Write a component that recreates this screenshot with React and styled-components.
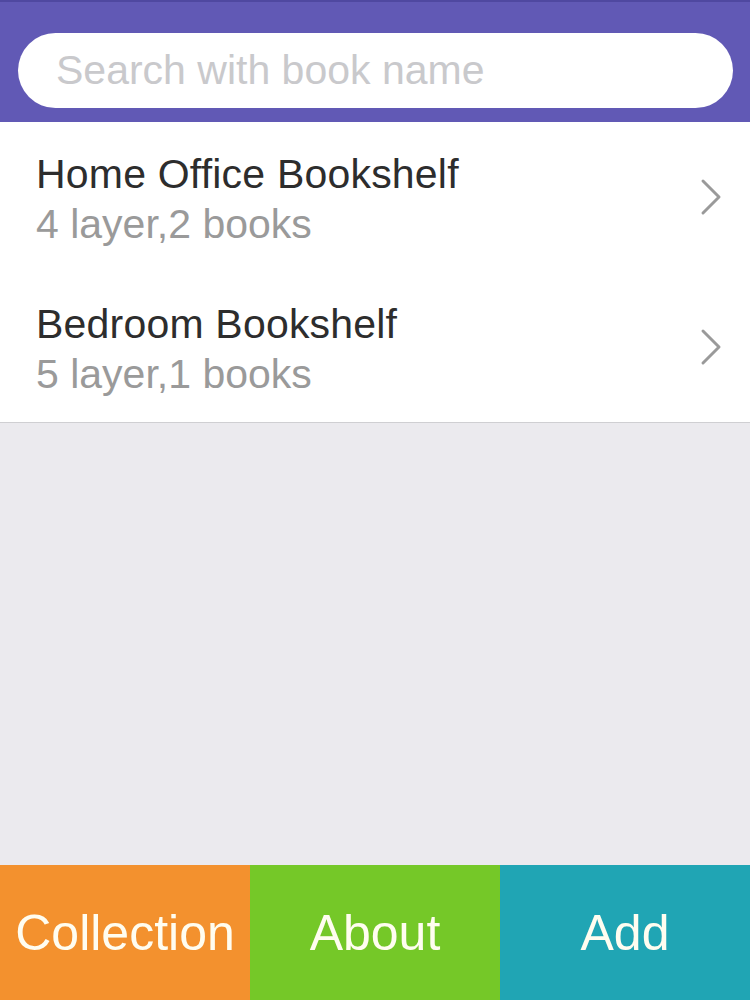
import React from "react";
import styled, { createGlobalStyle } from "styled-components";

const Global = createGlobalStyle`
  html, body { margin: 0; padding: 0; }
  body { font-family: "Liberation Sans", Arial, sans-serif; background: #ebeaee; }
  #root { height: 1000px; }
`;

const Page = styled.div`
  width: 750px;
  height: 1000px;
  display: flex;
  flex-direction: column;
  background: #ebeaee;
`;

const Header = styled.header`
  background: #6159b5;
  border-top: 2px solid #4f48a0;
  padding: 31px 17px 14px 18px;
`;

const SearchBox = styled.input`
  box-sizing: border-box;
  display: block;
  width: 100%;
  height: 75px;
  border: none;
  outline: none;
  border-radius: 38px;
  background: #fff;
  padding: 0 0 0 38px;
  font-family: "Liberation Sans", Arial, sans-serif;
  font-size: 41px;
  color: #333;
  &::placeholder { color: #c9c9cc; }
`;

const List = styled.ul`
  list-style: none;
  margin: 0;
  padding: 0;
  background: #fff;
  border-bottom: 1px solid #cfcfd2;
`;

const Row = styled.li`
  height: 150px;
  display: flex;
  align-items: center;
  padding: 0 28px 0 36px;
`;

const RowText = styled.div`
  flex: 1;
  display: flex;
  flex-direction: column;
  padding-top: 3px;
`;

const Title = styled.div`
  font-size: 41px;
  color: #2d2d2d;
  line-height: 50px;
  letter-spacing: 0.2px;
`;

const Sub = styled.div`
  font-size: 41px;
  color: #9a9a9a;
  line-height: 50px;
`;

const Spacer = styled.div`
  flex: 1;
`;

const TabBar = styled.nav`
  height: 135px;
  display: grid;
  grid-template-columns: repeat(3, 1fr);
`;

const Tab = styled.button`
  border: none;
  margin: 0;
  padding: 0;
  background: ${(p) => p.$bg};
  color: #fffdf0;
  font-family: "Liberation Sans", Arial, sans-serif;
  font-size: 50px;
  display: flex;
  align-items: center;
  justify-content: center;
`;

const Chevron = () => (
  <svg width="22" height="38" viewBox="0 0 22 38" fill="none">
    <path d="M3 3 L19 19 L3 35" stroke="#9a9a9a" strokeWidth="3" strokeLinecap="round" strokeLinejoin="round" />
  </svg>
);

const shelves = [
  { name: "Home Office Bookshelf", info: "4 layer,2 books" },
  { name: "Bedroom Bookshelf", info: "5 layer,1 books" },
];

export default function App() {
  return (
    <Page>
      <Global />
      <Header>
        <SearchBox placeholder="Search with book name" />
      </Header>
      <List>
        {shelves.map((s) => (
          <Row key={s.name}>
            <RowText>
              <Title>{s.name}</Title>
              <Sub>{s.info}</Sub>
            </RowText>
            <Chevron />
          </Row>
        ))}
      </List>
      <Spacer />
      <TabBar>
        <Tab $bg="#f3912e">Collection</Tab>
        <Tab $bg="#75c828">About</Tab>
        <Tab $bg="#20a5b4">Add</Tab>
      </TabBar>
    </Page>
  );
}
